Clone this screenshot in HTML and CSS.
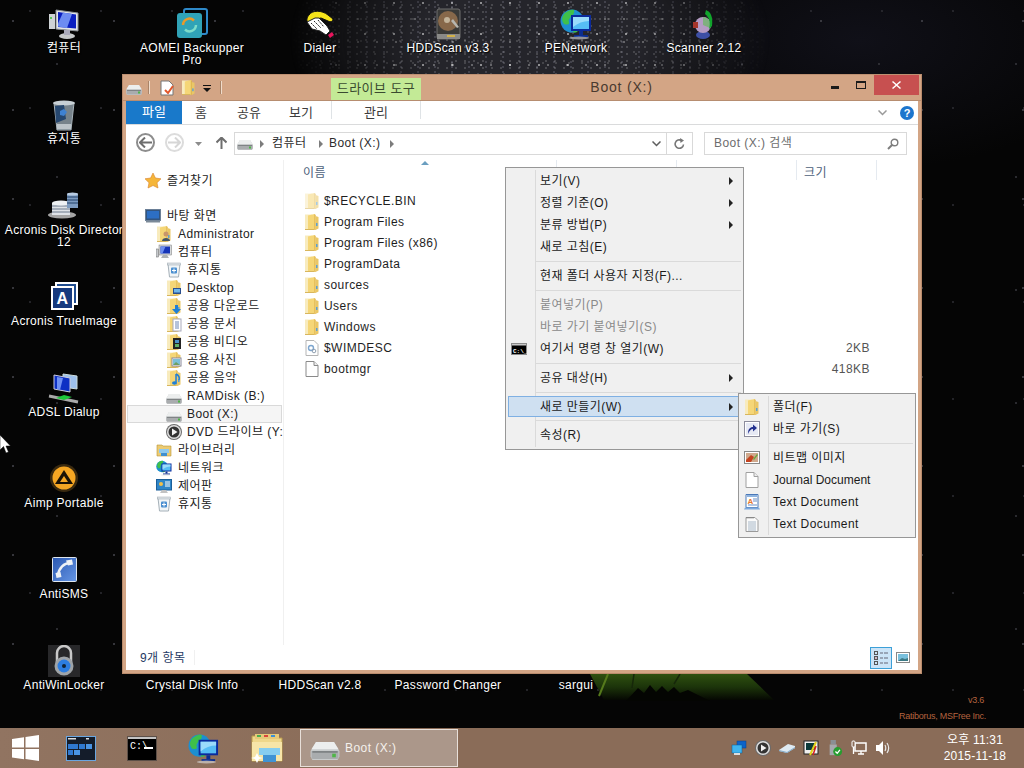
FILE: index.html
```html
<!DOCTYPE html>
<html lang="ko">
<head>
<meta charset="utf-8">
<title>Boot (X:)</title>
<link rel="stylesheet" href="styles.css">
</head>
<body>
<svg class="defs" width="0" height="0">
  <defs>
    <symbol id="folder" viewBox="0 0 14 16">
      <path d="M0 .5h7l1 1v14H0z" fill="#f8ebbd"/>
      <path d="M3 1.500l6.500-1.500 1 1v15l-7.500-1z" fill="#f5d677"/>
      <path d="M9.500 0l1 1v15l-1 0z" fill="#d9ab42"/>
      <path d="M10.500 2l3 1v11.500l-3 1.500z" fill="#eac766"/>
      <path d="M0 15h9v1H0z" fill="#d8b65c"/>
      <rect x="11" y="9" width="1.500" height="3" fill="#5b9fd6"/>
    </symbol>
    <symbol id="drive" viewBox="0 0 16 10">
      <path d="M3 0h10l3 5v3l-1 2H1L0 8V5z" fill="#c8cbcc"/>
      <path d="M3 0h10l2.500 4H.5z" fill="#eceeee"/>
      <path d="M.5 5h15v3.500l-.5 1H1l-.5-1z" fill="#a9acae"/>
      <rect x="1" y="5" width="14" height="1" fill="#7f8385"/>
      <rect x="12" y="6.500" width="2" height="2" fill="#4fb548"/>
    </symbol>
    <symbol id="bin" viewBox="0 0 16 16">
      <path d="M2 2h12l-1.500 13h-9z" fill="#f1f5f7" stroke="#a5b0b8"/>
      <rect x="1.500" y="1" width="13" height="2" fill="#dfe5e9" stroke="#9aa5ad" stroke-width=".5"/>
      <rect x="5" y="5.500" width="6" height="6" rx="1" fill="#4b8fd0"/>
      <path d="M8 6.500v4M6 8.500h4" stroke="#fff"/>
    </symbol>
    <symbol id="monitor" viewBox="0 0 16 16">
      <rect x="0" y="5" width="2.500" height="8" fill="#c5c8cb" stroke="#666" stroke-width=".5"/>
      <rect x="3" y="1" width="12.500" height="10" fill="#d7dadc" stroke="#777" stroke-width=".5"/>
      <path d="M4.500 2.500h9.500v7H4.500z" fill="#1534b8"/>
      <path d="M4.500 2.500h5l-3 7h-2z" fill="#6b8df0"/>
      <path d="M7 11h4l2 3H5z" fill="#aeb2b5"/>
    </symbol>
    <symbol id="netglobe" viewBox="0 0 32 32">
      <circle cx="12" cy="13" r="11.500" fill="#1d8fd0"/>
      <path d="M4 6c3-3 7-5 10-4 1 3-1 5-3 6-1 3-3 3-2 6s-3 3-5 2C1 12 2 9 4 6zM15 18c3-1 4 1 3 4s-3 3-5 2z" fill="#3fc04a"/>
      <rect x="11" y="7" width="20" height="16" fill="#0a2a9c"/>
      <rect x="13" y="9" width="16" height="12" fill="#56bdf5"/>
      <path d="M13 9h16v4c-6 0-11 2-16 6z" fill="#9bdcfb"/>
      <rect x="19" y="23" width="4" height="4" fill="#0b2d8f"/>
      <rect x="14" y="27" width="14" height="2" fill="#0b2d8f"/>
      <ellipse cx="19" cy="30" rx="10" ry="1.500" fill="#ddd" opacity=".6"/>
    </symbol>
    <symbol id="playdisc" viewBox="0 0 16 16">
      <circle cx="8" cy="8" r="8" fill="#6b6b6b"/>
      <circle cx="8" cy="8" r="7" fill="#dedede"/>
      <circle cx="8" cy="8" r="5.500" fill="#333"/>
      <path d="M6 4.500l5.500 3.500L6 11.500z" fill="#f2f2f2"/>
    </symbol>
  </defs>
</svg>

<div class="screen">
  <main class="desktop">
    <div class="milky"></div>
    <svg class="tent" width="200" height="30" viewBox="0 0 200 30">
      <defs>
        <linearGradient id="tentfill" x1="0" y1="0" x2="0" y2="1">
          <stop offset="0" stop-color="#2f5010"/>
          <stop offset=".5" stop-color="#1c340a"/>
          <stop offset="1" stop-color="#050702"/>
        </linearGradient>
      </defs>
      <path d="M6 0H163L190 26H20z" fill="url(#tentfill)"/>
      <path d="M24 0L15 22" stroke="#55791c" stroke-width="2"/>
      <path d="M50 0l-2 14M96 0l-6 10" stroke="#16270a" stroke-width="1.500"/>
      <path d="M42 27l12-13 6 5 6-8 6 7 6-6 6 6 6-5 6 6 8-3 8 4 14 7z" fill="#040502"/>
    </svg>

    <div class="desk-item">
      <svg class="desk-icon" viewBox="0 0 32 32"><rect x="1" y="6" width="6" height="15" fill="#cfd3d6"/><circle cx="3" cy="10" r="1" fill="#3c3"/><path d="M8 2l22 3v18L8 21z" fill="#e3e5e7" stroke="#8b9196"/><path d="M10 4l18 2.500v14L10 19z" fill="#0a1fc0"/><path d="M15 4.500l9 1.500-5 14-9-1.500v-3z" fill="#6d8cf2"/><ellipse cx="19" cy="28" rx="8" ry="3" fill="#c6c9cb"/><path d="M16 22h6v5h-6z" fill="#aab"/></svg>
      <span class="desk-label">컴퓨터</span>
    </div>
    <div class="desk-item">
      <svg class="desk-icon" viewBox="0 0 32 32"><rect x="8" y="1" width="23" height="25" rx="2" fill="none" stroke="#2e89c9" stroke-width="2"/><rect x="1" y="5" width="25" height="25" rx="3" fill="#30a3b7"/><path d="M7 17a6.500 6.500 0 0 1 11-4.500" fill="none" stroke="#e99a2b" stroke-width="2.500"/><path d="M20 17a6.500 6.500 0 0 1-11 4.500" fill="none" stroke="#7ddccb" stroke-width="2.500"/></svg>
      <span class="desk-label">AOMEI Backupper Pro</span>
    </div>
    <div class="desk-item">
      <svg class="desk-icon" viewBox="0 0 32 32"><path d="M5 7c3-5 13-5 19 0l5 4c0 3-3 3-5 2l-7-3-5 1-4 2-4 1C2 13 3 9 5 7z" fill="#f6e41a" stroke="#111"/><path d="M3 14l8-4 4 0 8 8 3 5-4 4-6-4-8-2z" fill="#fff" stroke="#222"/><path d="M7 15l6 6M10 13l7 7M14 12l6 7" stroke="#222" stroke-dasharray="2 1"/><path d="M24 27l4-3 2 3-4 3z" fill="#e8155d"/></svg>
      <span class="desk-label">Dialer</span>
    </div>
    <div class="desk-item">
      <svg class="desk-icon" viewBox="0 0 32 32"><rect x="5" y="1" width="23" height="30" rx="2" fill="#3a3a38" stroke="#6f6f6f"/><circle cx="16" cy="13" r="10" fill="#87684a"/><circle cx="15" cy="12" r="3" fill="#c2b39a"/><path d="M25 20l-6-7 2-2 6 8z" fill="#b7b7b0"/><rect x="5" y="26" width="23" height="5" fill="#8a8a88"/><rect x="15" y="27" width="8" height="2" fill="#d2b24a"/></svg>
      <span class="desk-label">HDDScan v3.3</span>
    </div>
    <div class="desk-item">
      <svg class="desk-icon"><use href="#netglobe"/></svg>
      <span class="desk-label">PENetwork</span>
    </div>
    <div class="desk-item">
      <svg class="desk-icon" viewBox="0 0 32 32"><ellipse cx="15" cy="27" rx="7" ry="4" fill="#3d4fa5"/><circle cx="15" cy="17" r="8" fill="#b49bc4"/><path d="M15 17V9a8 8 0 0 1 7 11z" fill="#7fb07f"/><path d="M18 2c5 2 7 7 6 16l-3 3c2-7 0-12-4-15z" fill="#11a52c"/><rect x="5" y="14" width="5" height="6" fill="#a5362c"/></svg>
      <span class="desk-label">Scanner 2.12</span>
    </div>

    <div class="desk-item first-col">
      <svg class="desk-icon" viewBox="0 0 32 32"><path d="M6 4h20l-3 27H9z" fill="#77838b" stroke="#a9b4bb"/><ellipse cx="16" cy="4" rx="11" ry="2.500" fill="#c8d0d5"/><path d="M7 7l9-1 2 14-10 4z" fill="#26476f"/><path d="M12 12l4-2 3 3-3 4-4-1z" fill="#3f82d2"/><rect x="9" y="25" width="14" height="5" fill="#bcc4c9"/></svg>
      <span class="desk-label">휴지통</span>
    </div>
    <div class="desk-item first-col">
      <svg class="desk-icon" viewBox="0 0 32 32"><ellipse cx="14" cy="25" rx="14" ry="3.500" fill="#a5a5a5"/><rect x="4" y="13" width="18" height="12" fill="#dfe3e8"/><path d="M4 16h18M4 19h18M4 22h18" stroke="#6d7a8d"/><ellipse cx="13" cy="13" rx="9" ry="2.500" fill="#eef1f4"/><rect x="19" y="4" width="11" height="14" fill="#7d9bc0"/><path d="M19 7h11M19 10h11M19 13h11" stroke="#24426a"/><ellipse cx="24.500" cy="4" rx="5.500" ry="1.500" fill="#b8cce2"/></svg>
      <span class="desk-label">Acronis Disk Director 12</span>
    </div>
    <div class="desk-item first-col">
      <svg class="desk-icon" viewBox="0 0 32 32"><rect x="8" y="2" width="21" height="21" fill="#1e4b8e" stroke="#fff" stroke-width="2"/><rect x="4" y="6" width="21" height="22" fill="#173a7e" stroke="#fff" stroke-width="2"/><text class="logo-a" x="14.500" y="23">A</text></svg>
      <span class="desk-label">Acronis TrueImage</span>
    </div>
    <div class="desk-item first-col">
      <svg class="desk-icon" viewBox="0 0 32 32"><path d="M15 2l14 2v13l-14-2z" fill="#9dc0ec" stroke="#cdd"/><path d="M6 3l16 3v14L6 17z" fill="#0d30c4" stroke="#ccd"/><path d="M9 5l6 1-3 12-3-1z" fill="#6f90f3"/><path d="M1 24l29 6" stroke="#a9a9a9" stroke-width="3"/><path d="M8 26l8-3 8 2-8 3z" fill="#1dc83b"/></svg>
      <span class="desk-label">ADSL Dialup</span>
    </div>
    <div class="desk-item first-col">
      <svg class="desk-icon" viewBox="0 0 32 32"><circle cx="16" cy="15" r="14" fill="#3a2a10"/><circle cx="16" cy="15" r="11.500" fill="#f5a623"/><path d="M16 7l9 14H7z" fill="#1a1206"/><path d="M16 13l4 6h-8z" fill="#f5a623"/></svg>
      <span class="desk-label">Aimp Portable</span>
    </div>
    <div class="desk-item first-col">
      <svg class="desk-icon" viewBox="0 0 32 32"><defs><linearGradient id="smsfill" x1="0" y1="0" x2="1" y2="1"><stop offset="0" stop-color="#2a58b2"/><stop offset="1" stop-color="#6696e4"/></linearGradient></defs><rect x="4.500" y="3.500" width="24" height="24" rx="1" fill="url(#smsfill)" stroke="#dfe6ee"/><path d="M22 9c-6 0-11 5-12 12" fill="none" stroke="#eef2f6" stroke-width="2.500"/><path d="M18 6.500l6-1 1 5-5 1zM7.500 19l5-1 1 5-5 1z" fill="#eef2f6"/></svg>
      <span class="desk-label">AntiSMS</span>
    </div>
    <div class="desk-item first-col">
      <svg class="desk-icon" viewBox="0 0 32 32"><rect width="32" height="32" fill="#28282a"/><path d="M9 17V8a7 7 0 0 1 14 0v9" fill="none" stroke="#c9c9c9" stroke-width="2.500"/><circle cx="16" cy="21" r="9.500" fill="#9fa4a8"/><circle cx="16" cy="21" r="6.500" fill="#2c7de0"/><circle cx="16" cy="21" r="2" fill="#123"/></svg>
      <span class="desk-label">AntiWinLocker</span>
    </div>
    <div class="desk-item"><span class="desk-spacer"></span><span class="desk-label">Crystal Disk Info</span></div>
    <div class="desk-item"><span class="desk-spacer"></span><span class="desk-label">HDDScan v2.8</span></div>
    <div class="desk-item"><span class="desk-spacer"></span><span class="desk-label">Password Changer</span></div>
    <div class="desk-item"><span class="desk-spacer"></span><span class="desk-label">sargui</span></div>

    <div class="watermark">
      <span class="wm-version">v3.6</span>
      <span>Ratiborus, MSFree Inc.</span>
    </div>
  </main>

  <svg class="cursor" width="11" height="19" viewBox="0 0 11 19"><path d="M0 0v15l3.500-3.500 2.500 6.500 2.500-1-2.500-6h4.500z" fill="#fff" stroke="#000" stroke-width=".5"/></svg>

  <section class="window">
    <header class="titlebar">
      <div class="qat">
        <svg class="qat-drive"><use href="#drive"/></svg>
        <span class="qat-sep"></span>
        <svg class="qat-doc" viewBox="0 0 15 16"><path d="M1 1h8l4 4v10H1z" fill="#fff" stroke="#777"/><path d="M5 10l3 3 5-7" fill="none" stroke="#e2572b" stroke-width="2"/></svg>
        <svg class="qat-folder"><use href="#folder"/></svg>
        <svg class="qat-arrow" viewBox="0 0 8 8"><rect x="0" y="0" width="8" height="1" fill="#111"/><path d="M0 3h8L4 7z" fill="#111"/></svg>
        <span class="qat-sep qat-sep-end"></span>
      </div>
      <div class="tool-tab">드라이브 도구</div>
      <div class="title">Boot (X:)</div>
      <div class="controls">
        <span class="ctl"><i class="ctl-min"></i></span>
        <span class="ctl"><i class="ctl-max"></i></span>
        <span class="ctl ctl-close">
          <svg width="9" height="8" viewBox="0 0 9 8"><path d="M1 0l3.500 3L8 0l1 1-3.500 3L9 7 8 8 4.500 5 1 8 0 7l3.500-3L0 1z" fill="#fff"/></svg>
        </span>
      </div>
    </header>

    <nav class="ribbon">
      <span class="tab tab-file">파일</span>
      <span class="tab tab-home">홈</span>
      <span class="tab tab-share">공유</span>
      <span class="tab tab-view">보기</span>
      <span class="tab tab-manage">관리</span>
      <span class="ribbon-fill"></span>
      <svg class="ribbon-chev" width="9" height="6" viewBox="0 0 9 6"><path d="M.5 .5l4 4 4-4" fill="none" stroke="#9a9a9a" stroke-width="1.500"/></svg>
      <span class="help">?</span>
    </nav>

    <div class="navbar">
      <span class="circle-btn circle-back">
        <svg width="13" height="11" viewBox="0 0 13 11"><path d="M6 .5L1 5.500l5 5M1 5.500h12" fill="none" stroke="#6e6e6e" stroke-width="2"/></svg>
      </span>
      <span class="circle-btn circle-fwd">
        <svg width="13" height="11" viewBox="0 0 13 11"><path d="M7 .5l5 5-5 5M12 5.500H0" fill="none" stroke="#d6d6d6" stroke-width="2"/></svg>
      </span>
      <svg class="nav-down" width="7" height="4" viewBox="0 0 7 4"><path d="M0 0h7L3.500 4z" fill="#8c8c8c"/></svg>
      <svg class="nav-up" width="11" height="12" viewBox="0 0 11 12"><path d="M.5 5.500l5-5 5 5M5.500 1v11" fill="none" stroke="#6e6e6e" stroke-width="2"/></svg>
      <div class="address">
        <svg class="addr-drive"><use href="#drive"/></svg>
        <i class="crumb-arrow"></i>
        <span class="crumb crumb-a">컴퓨터</span>
        <i class="crumb-arrow"></i>
        <span class="crumb crumb-b">Boot (X:)</span>
        <i class="crumb-arrow"></i>
        <span class="addr-fill"></span>
        <svg class="addr-chev" width="9" height="6" viewBox="0 0 9 6"><path d="M.5 .5l4 4 4-4" fill="none" stroke="#5e5e5e" stroke-width="1.500"/></svg>
        <span class="addr-refresh">
          <svg width="11" height="12" viewBox="0 0 11 12"><path d="M9.500 6.500a4.200 4.200 0 1 1-2-4" fill="none" stroke="#777" stroke-width="1.600"/><path d="M6 0l4 2.500L6.500 5z" fill="#777"/></svg>
        </span>
      </div>
      <div class="search">
        <span class="search-text">Boot (X:) 검색</span>
        <svg width="12" height="12" viewBox="0 0 12 12"><circle cx="7.500" cy="4.500" r="3.300" fill="none" stroke="#7d7d7d" stroke-width="1.400"/><path d="M5 7l-4 4" stroke="#7d7d7d" stroke-width="2"/></svg>
      </div>
    </div>

    <div class="content">
      <aside class="navpane">
        <div class="nav-row nav-fav">
          <svg class="nav-icon" viewBox="0 0 16 16"><path d="M8 0l2.400 5 5.600.8-4 3.900 1 5.300L8 12.500 3 15l1-5.300-4-3.900L5.600 5z" fill="#f5b63a" stroke="#d9822b" stroke-width=".6"/></svg>
          <span>즐겨찾기</span>
        </div>
        <div class="nav-row nav-desktop">
          <svg class="nav-icon" viewBox="0 0 16 16"><rect x=".5" y="1.500" width="15" height="11" fill="#33557f" stroke="#6a7f97"/><rect x="2" y="3" width="12" height="7.500" fill="#2d6fc4"/><rect x="1" y="12.500" width="14" height="2" fill="#7c8a98"/></svg>
          <span>바탕 화면</span>
        </div>
        <div class="nav-row lv2">
          <svg class="nav-icon" viewBox="0 0 14 16"><use href="#folder"/><circle cx="9" cy="8" r="2.500" fill="#c9966a"/><path d="M5 15c0-4 8-4 8 0z" fill="#456"/></svg>
          <span>Administrator</span>
        </div>
        <div class="nav-row lv2"><svg class="nav-icon"><use href="#monitor"/></svg><span>컴퓨터</span></div>
        <div class="nav-row lv3"><svg class="nav-icon"><use href="#bin"/></svg><span>휴지통</span></div>
        <div class="nav-row lv3">
          <svg class="nav-icon" viewBox="0 0 14 16"><use href="#folder"/><rect x="6" y="8" width="8" height="6" fill="#2b4f8f"/><rect x="7" y="9" width="6" height="3.500" fill="#6fb6e8"/></svg>
          <span>Desktop</span>
        </div>
        <div class="nav-row lv3">
          <svg class="nav-icon" viewBox="0 0 14 16"><use href="#folder"/><path d="M8 7h3v4h3l-4.500 5L5 11h3z" fill="#1f7fd6"/></svg>
          <span>공용 다운로드</span>
        </div>
        <div class="nav-row lv3">
          <svg class="nav-icon" viewBox="0 0 14 16"><use href="#folder"/><rect x="6" y="3" width="8" height="12" fill="#fff" stroke="#aab"/><path d="M8 6h4M8 8h4M8 10h4M8 12h4" stroke="#6a86b8"/></svg>
          <span>공용 문서</span>
        </div>
        <div class="nav-row lv3">
          <svg class="nav-icon" viewBox="0 0 14 16"><use href="#folder"/><rect x="6" y="4" width="8" height="11" fill="#222"/><rect x="8" y="6" width="4" height="3" fill="#4a90c8"/><rect x="8" y="10" width="4" height="3" fill="#5fae66"/></svg>
          <span>공용 비디오</span>
        </div>
        <div class="nav-row lv3">
          <svg class="nav-icon" viewBox="0 0 14 16"><use href="#folder"/><rect x="5" y="6" width="9" height="8" fill="#fff" stroke="#889"/><rect x="6" y="7" width="7" height="6" fill="#7cc0d8"/><path d="M6 13l3-3 4 3z" fill="#6f9f62"/></svg>
          <span>공용 사진</span>
        </div>
        <div class="nav-row lv3">
          <svg class="nav-icon" viewBox="0 0 14 16"><use href="#folder"/><path d="M9 4v8.500M9 4c2 1 4 3 3 6" fill="none" stroke="#1f7fd6" stroke-width="1.500"/><ellipse cx="7.500" cy="13" rx="2.500" ry="1.800" fill="#1f7fd6"/></svg>
          <span>공용 음악</span>
        </div>
        <div class="nav-row lv3"><svg class="nav-icon nav-drive"><use href="#drive"/></svg><span>RAMDisk (B:)</span></div>
        <div class="nav-row lv3 nav-selected"><svg class="nav-icon nav-drive"><use href="#drive"/></svg><span>Boot (X:)</span></div>
        <div class="nav-row lv3"><svg class="nav-icon"><use href="#playdisc"/></svg><span class="nowrap">DVD 드라이브 (Y:)</span></div>
        <div class="nav-row lv2">
          <svg class="nav-icon" viewBox="0 0 16 16"><path d="M1 3h5l1 1h8v10H1z" fill="#eccb72" stroke="#b89436" stroke-width=".6"/><path d="M3 7h10v4H3z" fill="#8fc9ee"/><path d="M5 11h6v3H5z" fill="#3f8fd0"/></svg>
          <span>라이브러리</span>
        </div>
        <div class="nav-row lv2"><svg class="nav-icon"><use href="#netglobe"/></svg><span>네트워크</span></div>
        <div class="nav-row lv2">
          <svg class="nav-icon" viewBox="0 0 16 16"><rect x=".5" y="1.500" width="15" height="10.500" fill="#2f86c8" stroke="#1c5f99"/><rect x="3" y="4" width="4" height="4" rx="2" fill="#f2c04a"/><path d="M9 4h5M9 6h5M9 8h5" stroke="#fff"/><path d="M6 12h4l2 3H4z" fill="#c2c2c2"/></svg>
          <span>제어판</span>
        </div>
        <div class="nav-row lv2"><svg class="nav-icon"><use href="#bin"/></svg><span>휴지통</span></div>
      </aside>

      <div class="files">
        <div class="list-head">
          <span class="head-cell head-name">이름<i class="sort-arrow"></i></span>
          <span class="head-cell"></span>
          <span class="head-cell"></span>
          <span class="head-cell">크기</span>
        </div>
        <div class="file-row"><span class="file-name file-hidden"><svg class="file-icon"><use href="#folder"/></svg>$RECYCLE.BIN</span></div>
        <div class="file-row"><span class="file-name"><svg class="file-icon"><use href="#folder"/></svg>Program Files</span></div>
        <div class="file-row"><span class="file-name"><svg class="file-icon"><use href="#folder"/></svg>Program Files (x86)</span></div>
        <div class="file-row"><span class="file-name"><svg class="file-icon"><use href="#folder"/></svg>ProgramData</span></div>
        <div class="file-row"><span class="file-name"><svg class="file-icon"><use href="#folder"/></svg>sources</span></div>
        <div class="file-row"><span class="file-name"><svg class="file-icon"><use href="#folder"/></svg>Users</span></div>
        <div class="file-row"><span class="file-name"><svg class="file-icon"><use href="#folder"/></svg>Windows</span></div>
        <div class="file-row">
          <span class="file-name"><svg class="file-icon" viewBox="0 0 14 16"><path d="M1 .5h8l4 4v11H1z" fill="#fff" stroke="#b5b5b5"/><circle cx="6" cy="8" r="2.500" fill="none" stroke="#7da6cf" stroke-width="1.400"/><circle cx="9" cy="11" r="1.800" fill="none" stroke="#8f9fb0"/></svg>$WIMDESC</span>
          <span class="file-type">시스템 파일</span>
          <span class="file-size">2KB</span>
        </div>
        <div class="file-row">
          <span class="file-name"><svg class="file-icon" viewBox="0 0 14 16"><path d="M1 .5h8l4 4v11H1z" fill="#fff" stroke="#8a8a8a"/><path d="M9 .5v4h4" fill="#eee" stroke="#8a8a8a"/></svg>bootmgr</span>
          <span class="file-type">파일</span>
          <span class="file-size">418KB</span>
        </div>
      </div>
    </div>

    <footer class="statusbar">
      <span class="status-count">9개 항목</span>
      <span class="status-fill"></span>
      <span class="view-btn view-on">
        <svg width="15" height="14" viewBox="0 0 15 14"><g fill="none" stroke="#555"><rect x=".5" y=".5" width="3" height="3"/><rect x=".5" y="5.500" width="3" height="3"/><rect x=".5" y="10.500" width="3" height="3"/></g><path d="M6 2h3M10 2h4M6 7h3M10 7h4M6 12h3M10 12h4" stroke="#667"/><rect x="1.500" y="6.500" width="1" height="1" fill="#d33"/></svg>
      </span>
      <span class="view-btn">
        <svg width="14" height="11" viewBox="0 0 14 11"><rect x=".5" y=".5" width="13" height="10" fill="#fff" stroke="#888"/><rect x="2" y="2" width="10" height="7" fill="#79c0dd"/><path d="M2 9l4-3 3 1 3-1v3z" fill="#3c7a86"/></svg>
      </span>
    </footer>
  </section>

  <div class="menu menu-main">
    <div class="menu-item"><span>보기(V)</span><i class="menu-arrow"></i></div>
    <div class="menu-item"><span>정렬 기준(O)</span><i class="menu-arrow"></i></div>
    <div class="menu-item"><span>분류 방법(P)</span><i class="menu-arrow"></i></div>
    <div class="menu-item"><span>새로 고침(E)</span></div>
    <div class="menu-sep"></div>
    <div class="menu-item"><span>현재 폴더 사용자 지정(F)...</span></div>
    <div class="menu-sep"></div>
    <div class="menu-item menu-disabled"><span>붙여넣기(P)</span></div>
    <div class="menu-item menu-disabled"><span>바로 가기 붙여넣기(S)</span></div>
    <div class="menu-item">
      <svg class="menu-icon" viewBox="0 0 16 12"><rect x=".5" y=".5" width="15" height="11" fill="#000" stroke="#8a8a8a"/><rect x="1" y="1" width="14" height="1.500" fill="#c9c9c9"/><text class="cmd-text" x="2" y="9.500">C:\_</text></svg>
      <span>여기서 명령 창 열기(W)</span>
    </div>
    <div class="menu-sep"></div>
    <div class="menu-item"><span>공유 대상(H)</span><i class="menu-arrow"></i></div>
    <div class="menu-sep"></div>
    <div class="menu-item menu-active"><span>새로 만들기(W)</span><i class="menu-arrow"></i></div>
    <div class="menu-sep"></div>
    <div class="menu-item"><span>속성(R)</span></div>
  </div>

  <div class="menu menu-sub">
    <div class="menu-item"><svg class="menu-icon menu-icon-folder"><use href="#folder"/></svg><span>폴더(F)</span></div>
    <div class="menu-item">
      <svg class="menu-icon" viewBox="0 0 16 16"><rect x=".5" y=".5" width="15" height="15" fill="#fff" stroke="#8c8c9c"/><rect x="2" y="2" width="12" height="12" fill="#e6e9f4"/><path d="M4 13c0-5 2-7 5-7V3.500L13 7l-4 3.500V8c-2 0-4 2-5 5z" fill="#23318f"/></svg>
      <span>바로 가기(S)</span>
    </div>
    <div class="menu-sep"></div>
    <div class="menu-item">
      <svg class="menu-icon" viewBox="0 0 16 16"><rect x=".5" y="1.500" width="15" height="12" fill="#fff" stroke="#888"/><rect x="2" y="3" width="12" height="9" fill="#cfa98d"/><path d="M2 10l5-5 3 2-3 5H2z" fill="#c4431f"/><path d="M9 9l4-5 1 1-4 5z" fill="#6aa83f"/></svg>
      <span>비트맵 이미지</span>
    </div>
    <div class="menu-item">
      <svg class="menu-icon" viewBox="0 0 14 16"><path d="M1 .5h8l4 4v11H1z" fill="#fff" stroke="#a0a0a0"/><path d="M9 .5v4h4" fill="#eee" stroke="#a0a0a0"/></svg>
      <span class="tight">Journal Document</span>
    </div>
    <div class="menu-item">
      <svg class="menu-icon" viewBox="0 0 16 16"><path d="M2 .5h12v13H2z" fill="#fff" stroke="#4a78b8"/><rect x="3" y="1" width="10" height="2" fill="#8fb4e0"/><text class="doc-a" x="3.500" y="10">A</text><path d="M9 5h4M9 7h4M4 11h9" stroke="#6b8fc4"/><path d="M1 13.500h14l1 2H0z" fill="#7ea9dd"/></svg>
      <span>Text Document</span>
    </div>
    <div class="menu-item">
      <svg class="menu-icon" viewBox="0 0 14 16"><path d="M1 1.500h9l3 3v11H1z" fill="#fafafa" stroke="#9a9a9a"/><path d="M3 6h8M3 8h8M3 10h8M3 12h8M3 14h8" stroke="#a8b8c8"/><path d="M2 1v1.500M4 1v1.500M6 1v1.500M8 1v1.500" stroke="#777"/></svg>
      <span>Text Document</span>
    </div>
  </div>

  <footer class="taskbar">
    <svg class="start" width="27" height="26" viewBox="0 0 27 26"><path d="M0 4l12-1.800v10.300H0zM13.500 2l13.500-2v12.500H13.500zM0 14h12v10.200L0 22.500zM13.500 14H27v12l-13.500-2z" fill="#fff"/></svg>
    <span class="task-app task-cp">
      <svg width="30" height="25" viewBox="0 0 30 25"><rect x=".5" y=".5" width="29" height="24" fill="#141c2a" stroke="#6aa6e0"/><rect x="2" y="2" width="8" height="1.500" fill="#ddd"/><rect x="20" y="2" width="3" height="1.500" fill="#ddd"/><rect x="2" y="8" width="10" height="5" fill="#2f78d0"/><rect x="13" y="8" width="6" height="5" fill="#2f78d0"/><rect x="20" y="8" width="6" height="5" fill="#4a94e4"/><rect x="2" y="14" width="5" height="5" fill="#2f78d0"/><rect x="8" y="14" width="6" height="5" fill="#4a94e4"/></svg>
    </span>
    <span class="task-app task-cmd">
      <svg width="30" height="25" viewBox="0 0 30 25"><rect x=".5" y=".5" width="29" height="24" fill="#000" stroke="#5d5048"/><rect x="1" y="1" width="28" height="2" fill="#c4c4c4"/><text class="cmd-big" x="3" y="13">C:\</text><rect x="17" y="11" width="9" height="2" fill="#fff"/></svg>
    </span>
    <svg class="task-app task-net"><use href="#netglobe"/></svg>
    <svg class="task-app task-lib" viewBox="0 0 32 30"><path d="M1 3h10l2 2h18v23H1z" fill="#efd78b" stroke="#b89b4c"/><rect x="4" y="1" width="24" height="5" fill="#e6c979"/><rect x="6" y="2" width="4" height="2" fill="#4caf50"/><rect x="13" y="2" width="4" height="2" fill="#d9463c"/><rect x="20" y="2" width="4" height="2" fill="#3b8fd6"/><path d="M1 9h30v19H1z" fill="#f7e5a8"/><path d="M8 15h21v7H8z" fill="#86cdf0"/><path d="M12 22h13v7H12z" fill="#3f93d4"/><path d="M6 20l2 4 4 1-4 1-2 4-2-4-4-1 4-1z" fill="#fff"/></svg>
    <div class="task-active">
      <svg class="task-drive"><use href="#drive"/></svg>
      <span>Boot (X:)</span>
    </div>
    <span class="task-fill"></span>
    <div class="tray">
      <svg class="tray-icon" viewBox="0 0 16 16"><rect x="6" y="1" width="9" height="7" fill="#0c63c9" stroke="#0a3f86" stroke-width=".5"/><rect x="1" y="5" width="10" height="8" fill="#3fb4ee" stroke="#0a5c96" stroke-width=".5"/><rect x="3" y="13" width="6" height="2" fill="#ddd"/></svg>
      <svg class="tray-icon"><use href="#playdisc"/></svg>
      <svg class="tray-icon" viewBox="0 0 16 16"><path d="M0 10l9-6 7 2v2l-8 5-8-2z" fill="#dfeaf2"/><path d="M0 10l8 2 8-5v1l-8 5-8-2z" fill="#7fa9c9"/></svg>
      <svg class="tray-icon" viewBox="0 0 16 16"><rect x="1" y="1" width="14" height="13" fill="#f0f0f0" stroke="#222"/><rect x="3" y="3" width="9" height="7" fill="#0b3a3a"/><path d="M13 2L7 15" stroke="#e3d21c" stroke-width="2"/><path d="M13 6l-3 9" stroke="#d62020" stroke-width="1.500"/></svg>
      <svg class="tray-icon" viewBox="0 0 16 18"><rect x="3" y="0" width="6" height="5" fill="#8a8f94"/><rect x="2" y="5" width="8" height="12" fill="#a5a9ad"/><circle cx="11" cy="13" r="5" fill="#279d2f"/><path d="M8.500 13l2 2 3-4" fill="none" stroke="#fff" stroke-width="1.500"/></svg>
      <svg class="tray-icon" viewBox="0 0 16 16"><rect x="4" y="3" width="11" height="8" fill="none" stroke="#fff" stroke-width="1.500"/><rect x="1" y="1" width="3" height="6" rx="1" fill="#8a6c58" stroke="#fff"/><path d="M2.500 7v7M7 14h6M10 11v3" stroke="#fff" stroke-width="1.300"/></svg>
      <svg class="tray-icon" viewBox="0 0 16 16"><path d="M1 5h3l4-4v14l-4-4H1z" fill="#fff"/><path d="M10 5c1 2 1 4 0 6M12 3c2 3 2 7 0 10" fill="none" stroke="#e8e8e8" stroke-width="1.200"/></svg>
    </div>
    <div class="clock">
      <span>오후 11:31</span>
      <span>2015-11-18</span>
    </div>
  </footer>
</div>
</body>
</html>
```

FILE: styles.css
```css
html, body {
  margin: 0;
  padding: 0;
  width: 1024px;
  height: 768px;
  overflow: hidden;
}

body {
  font-family: "Liberation Sans", "Noto Sans CJK KR", sans-serif;
  font-size: 12px;
  line-height: 14px;
  color: #1e1e1e;
  letter-spacing: .45px;
}

.defs { position: absolute; }

.screen {
  position: relative;
  width: 1024px;
  height: 768px;
  display: flex;
  flex-direction: column;
  overflow: hidden;
  background: #000;
}

/* Desktop */
.desktop {
  position: relative;
  flex: 1;
  display: grid;
  grid-template-columns: repeat(6, 128px);
  grid-auto-rows: 91px;
  background-color: #050505;
  background-image:
    radial-gradient(circle at 13px 21px, #48484f .6px, transparent 1px),
    radial-gradient(circle at 57px 64px, #38383e .6px, transparent 1px),
    radial-gradient(circle at 30px 11px, #2e2e34 .6px, transparent 1px),
    radial-gradient(ellipse 260px 130px at 860px 40px, #101018 0%, transparent 100%);
  background-size: 101px 89px, 137px 113px, 71px 97px, auto;
  background-repeat: repeat, repeat, repeat, no-repeat;
}

.milky {
  position: absolute;
  left: 290px;
  top: -110px;
  width: 480px;
  height: 300px;
  background-color: #25252b;
  background-image:
    radial-gradient(circle at 4px 3px, rgba(255, 255, 255, .22) .6px, transparent 1px),
    radial-gradient(circle at 6px 8px, rgba(255, 255, 255, .2) .6px, transparent 1px),
    radial-gradient(circle at 9px 2px, rgba(205, 205, 230, .24) .6px, transparent 1px),
    radial-gradient(circle at 11px 14px, rgba(255, 255, 255, .4) .6px, transparent 1px),
    radial-gradient(circle at 17px 20px, rgba(255, 255, 255, .5) .7px, transparent 1px);
  background-size: 9px 7px, 13px 11px, 17px 5px, 19px 23px, 29px 31px;
  -webkit-mask-image: radial-gradient(ellipse 50% 50% at 50% 50%, #000 45%, transparent 100%);
  mask-image: radial-gradient(ellipse 50% 50% at 50% 50%, #000 45%, transparent 100%);
}

.tent {
  position: absolute;
  left: 584px;
  top: 674px;
}

.desk-item {
  display: flex;
  flex-direction: column;
  align-items: center;
  padding-top: 8px;
  text-align: center;
  position: relative;
}

.first-col { grid-column: 1; }

.desk-icon {
  display: block;
  width: 32px;
  height: 32px;
  flex: none;
}

.desk-spacer {
  display: block;
  width: 32px;
  height: 32px;
  flex: none;
}

.desk-label {
  display: block;
  margin-top: 2px;
  width: 126px;
  line-height: 12px;
  letter-spacing: .3px;
  color: #fff;
  text-shadow: 1px 1px 1px #000;
}

.logo-a {
  font: bold 16px "Liberation Sans", sans-serif;
  fill: #fff;
  text-anchor: middle;
}

.watermark {
  position: absolute;
  right: 38px;
  top: 694px;
  display: flex;
  flex-direction: column;
  align-items: flex-end;
  gap: 4px;
  font-size: 9px;
  line-height: 12px;
  letter-spacing: -.25px;
  color: #b4633f;
}

.wm-version { margin-right: 2px; }

.cursor {
  position: absolute;
  left: 0;
  top: 435px;
}

/* Window */
.window {
  position: absolute;
  left: 122px;
  top: 74px;
  width: 800px;
  height: 600px;
  box-sizing: border-box;
  border: 1px solid #b98b6c;
  border-top-color: #bd9072;
  background: #d3a585;
  display: flex;
  flex-direction: column;
  padding: 0 3px 3px;
}

.titlebar {
  height: 25px;
  flex: none;
  display: flex;
  align-items: flex-end;
  border-bottom: 1px solid #b78d70;
  margin: 0 -3px;
  padding: 0 2px 0 3px;
  box-sizing: content-box;
}

.qat {
  width: 205px;
  height: 25px;
  flex: none;
  display: flex;
  align-items: center;
}

.qat-drive { width: 16px; height: 10px; margin-top: 4px; }
.qat-sep { width: 1px; height: 13px; background: #f0dccb; border-left: 1px solid #a98468; margin-left: 6px; }
.qat-doc { width: 15px; height: 16px; margin-left: 10px; }
.qat-folder { width: 13px; height: 15px; margin-left: 7px; }
.qat-arrow { width: 8px; height: 8px; margin-left: 8px; margin-top: 3px; }
.qat-sep-end { margin-left: 9px; }

.tool-tab {
  width: 90px;
  height: 22px;
  flex: none;
  background: #c3ea96;
  font-size: 13px;
  line-height: 21px;
  text-align: center;
  color: #3a4a30;
}

.title {
  flex: 1;
  height: 25px;
  font-size: 14px;
  line-height: 25px;
  letter-spacing: .8px;
  text-align: center;
  color: #4a3a30;
}

.controls {
  display: flex;
  align-self: flex-start;
  flex: none;
}

.ctl {
  width: 26px;
  height: 20px;
  display: flex;
  align-items: center;
  justify-content: center;
}

.ctl-close {
  width: 45px;
  background: #c75050;
}

.ctl-min {
  display: block;
  width: 8px;
  height: 3px;
  background: #1b1b1b;
  margin-top: 5px;
}

.ctl-max {
  display: block;
  width: 8px;
  height: 5px;
  border: 1px solid #1b1b1b;
  border-top-width: 2px;
}

.ribbon {
  height: 23px;
  flex: none;
  display: flex;
  align-items: stretch;
  background: #fff;
  border-bottom: 1px solid #dadbdc;
  color: #3c3c3c;
  font-size: 13px;
}

.tab {
  display: block;
  text-align: center;
  line-height: 24px;
  letter-spacing: 0;
}

.tab-file {
  width: 56px;
  background: #1979ca;
  color: #fff;
  line-height: 22px;
}

.tab-home { width: 38px; }
.tab-share { width: 58px; }
.tab-view { width: 46px; margin-right: 7px; }

.tab-manage {
  width: 90px;
  height: 18px;
  box-sizing: border-box;
  border: 1px solid #dfe3e6;
  border-width: 0 1px;
  line-height: 24px;
  overflow: visible;
}

.ribbon-fill { flex: 1; }

.ribbon-chev {
  align-self: center;
  margin-right: 13px;
}

.help {
  align-self: center;
  width: 14px;
  height: 14px;
  margin-right: 4px;
  border-radius: 50%;
  background: #1c75cd;
  color: #fff;
  font: bold 11px/14px "Liberation Sans", sans-serif;
  text-align: center;
  letter-spacing: 0;
}

.navbar {
  height: 35px;
  flex: none;
  box-sizing: border-box;
  background: #fff;
  padding: 7px 12px 5px 10px;
  display: flex;
  align-items: flex-start;
}

.circle-btn {
  width: 19px;
  height: 19px;
  margin-top: 1px;
  box-sizing: border-box;
  border: 2px solid #8d8d8d;
  border-radius: 50%;
  display: flex;
  align-items: center;
  justify-content: center;
  flex: none;
}

.circle-fwd {
  margin-left: 10px;
  border-color: #dcdcdc;
}

.nav-down { margin: 10px 0 0 11px; flex: none; }
.nav-up { margin: 5px 0 0 14px; flex: none; }

.address {
  width: 459px;
  height: 23px;
  margin-left: 7px;
  box-sizing: border-box;
  border: 1px solid #d9d9d9;
  display: flex;
  align-items: center;
  color: #2c2c2c;
  flex: none;
}

.addr-drive { width: 16px; height: 10px; margin: 3px 0 0 2px; flex: none; }

.crumb-arrow {
  display: block;
  width: 0;
  height: 0;
  margin-left: 7px;
  border-left: 4px solid #7c7c7c;
  border-top: 4px solid transparent;
  border-bottom: 4px solid transparent;
  flex: none;
}

.crumb { flex: none; padding-bottom: 2px; }
.crumb-a { width: 40px; margin-left: 8px; }
.crumb-b { width: 54px; margin-left: 6px; }
.addr-fill { flex: 1; }
.addr-chev { margin-right: 5px; }

.addr-refresh {
  width: 26px;
  height: 21px;
  box-sizing: border-box;
  border-left: 1px solid #d9d9d9;
  display: flex;
  align-items: center;
  justify-content: center;
}

.search {
  width: 203px;
  height: 23px;
  margin-left: 11px;
  box-sizing: border-box;
  border: 1px solid #d9d9d9;
  padding: 0 7px 0 9px;
  display: flex;
  align-items: center;
  justify-content: space-between;
  color: #6d6d6d;
  flex: none;
}

.search-text { padding-bottom: 2px; }

.content {
  flex: 1;
  min-height: 0;
  display: flex;
  background: #fff;
}

/* Navigation pane */
.navpane {
  width: 158px;
  flex: none;
  box-sizing: border-box;
  border-right: 1px solid #f0f0f0;
  padding: 12px 1px 0 1px;
  overflow: hidden;
}

.nav-row {
  height: 18px;
  display: flex;
  align-items: center;
  box-sizing: border-box;
  white-space: nowrap;
  color: #222;
}

.nav-icon {
  width: 16px;
  height: 16px;
  flex: none;
  margin-right: 5px;
}

.nav-drive { height: 10px; margin-top: 5px; }

.nav-fav { padding-left: 18px; }
.nav-fav .nav-icon { margin-right: 6px; }
.nav-desktop { padding-left: 18px; margin-top: 17px; }
.nav-desktop .nav-icon { margin-right: 6px; }
.lv2 { padding-left: 29px; }
.lv2 .nav-icon { margin-right: 6px; }
.lv3 { padding-left: 39px; }
.lv3 .nav-icon { margin-right: 5px; }

.nav-selected {
  background: #f5f5f5;
  outline: 1px solid #d9d9d9;
  outline-offset: -1px;
}

.nowrap { white-space: nowrap; }

/* File list */
.files {
  flex: 1;
  min-width: 0;
}

.list-head {
  display: grid;
  grid-template-columns: 272px 120px 120px 80px;
  height: 30px;
  padding-left: 1px;
  color: #4c607a;
}

.head-cell {
  position: relative;
  height: 20px;
  box-sizing: border-box;
  border-right: 1px solid #e5eaf0;
  padding: 6px 0 0 7px;
}

.head-name { padding-left: 18px; }

.sort-arrow {
  position: absolute;
  left: 136px;
  top: 1px;
  width: 0;
  height: 0;
  border-left: 4px solid transparent;
  border-right: 4px solid transparent;
  border-bottom: 4px solid #6a9ec0;
}

.file-row {
  display: grid;
  grid-template-columns: 392px 120px 73px;
  height: 21px;
  align-items: center;
  padding-left: 1px;
  color: #1e1e1e;
}

.file-name {
  display: flex;
  align-items: center;
  padding-left: 20px;
  white-space: nowrap;
}

.file-icon {
  width: 14px;
  height: 16px;
  margin-right: 5px;
  flex: none;
}

.file-hidden .file-icon { opacity: .55; }

.file-type { padding-left: 5px; white-space: nowrap; grid-column: 2; letter-spacing: 0; }
.file-size { text-align: right; color: #555; grid-column: 3; }

.statusbar {
  height: 25px;
  flex: none;
  background: #fff;
  display: flex;
  align-items: center;
  padding-left: 14px;
  padding-right: 4px;
  color: #1f3a63;
}

.status-count {
  width: 55px;
  box-sizing: border-box;
  border-right: 1px solid #f0f0f0;
  height: 15px;
  white-space: nowrap;
  padding-top: 1px;
}

.status-fill { flex: 1; }

.view-btn {
  width: 22px;
  height: 22px;
  display: flex;
  align-items: center;
  justify-content: center;
  box-sizing: border-box;
}

.view-on {
  background: #cce4f7;
  border: 1px solid #3ca0d8;
}

/* Menus */
.menu {
  position: absolute;
  box-sizing: border-box;
  background: #f0f0f0;
  border: 1px solid #979797;
  padding: 2px 1px;
}

.menu-main { left: 505px; top: 167px; width: 239px; height: 283px; }
.menu-sub { left: 738px; top: 393px; width: 178px; height: 145px; }

.menu::before {
  content: "";
  position: absolute;
  top: 2px;
  bottom: 2px;
  left: 29px;
  width: 1px;
  background: #dadada;
}

.menu-item {
  position: relative;
  height: 22px;
  display: flex;
  align-items: center;
  padding-left: 33px;
  color: #1a1a1a;
  white-space: nowrap;
}

.menu-disabled { color: #8a8a8a; }

.menu-active {
  background: #cfe0f1;
  outline: 1px solid #7fb0e3;
  outline-offset: -1px;
  margin-left: 1px;
  padding-left: 32px;
  height: 21px;
  margin-bottom: 1px;
}

.menu-arrow {
  position: absolute;
  right: 9px;
  top: 7px;
  width: 0;
  height: 0;
  border-left: 4px solid #222;
  border-top: 4px solid transparent;
  border-bottom: 4px solid transparent;
}

.menu-sep {
  height: 1px;
  margin: 3px 1px 3px 29px;
  background: #dadada;
}

.menu-icon {
  position: absolute;
  left: 4px;
  top: 3px;
  width: 16px;
  height: 16px;
}

.menu-icon-folder { left: 5px; width: 14px; }

.tight { letter-spacing: 0; }

.cmd-text {
  font: bold 6px "Liberation Mono", monospace;
  fill: #fff;
  letter-spacing: 0;
}

.doc-a {
  font: bold 8px "Liberation Sans", sans-serif;
  fill: #e8772e;
}

.cmd-big {
  font: 10px "Liberation Mono", monospace;
  fill: #fff;
  letter-spacing: 0;
}

/* Taskbar */
.taskbar {
  height: 40px;
  flex: none;
  display: flex;
  align-items: center;
  background: linear-gradient(90deg, #917461 0%, #8a6c58 40%, #8a6c58 100%);
  color: #fff;
  position: relative;
}

.start { margin-left: 12px; flex: none; }

.task-app { display: flex; flex: none; }
.task-cp { margin-left: 27px; }
.task-cmd { margin-left: 31px; }
.task-net { margin-left: 31px; width: 31px; height: 31px; }
.task-lib { margin-left: 32px; width: 32px; height: 30px; }

.task-active {
  width: 158px;
  height: 38px;
  margin-left: 17px;
  box-sizing: border-box;
  border: 1px solid #e8e0da;
  background: #ab978a;
  display: flex;
  align-items: center;
  flex: none;
  color: #f4f0ec;
}

.task-drive {
  width: 32px;
  height: 18px;
  margin: 6px 0 0 8px;
  flex: none;
}

.task-active span { margin-left: 4px; }
.task-fill { flex: 1; }

.tray {
  display: flex;
  align-items: center;
  gap: 8px;
  margin-right: 54px;
}

.tray-icon {
  width: 16px;
  height: 16px;
  flex: none;
}

.clock {
  display: flex;
  flex-direction: column;
  align-items: center;
  width: 60px;
  margin-right: 19px;
  line-height: 16px;
  letter-spacing: .2px;
  white-space: nowrap;
}
```
